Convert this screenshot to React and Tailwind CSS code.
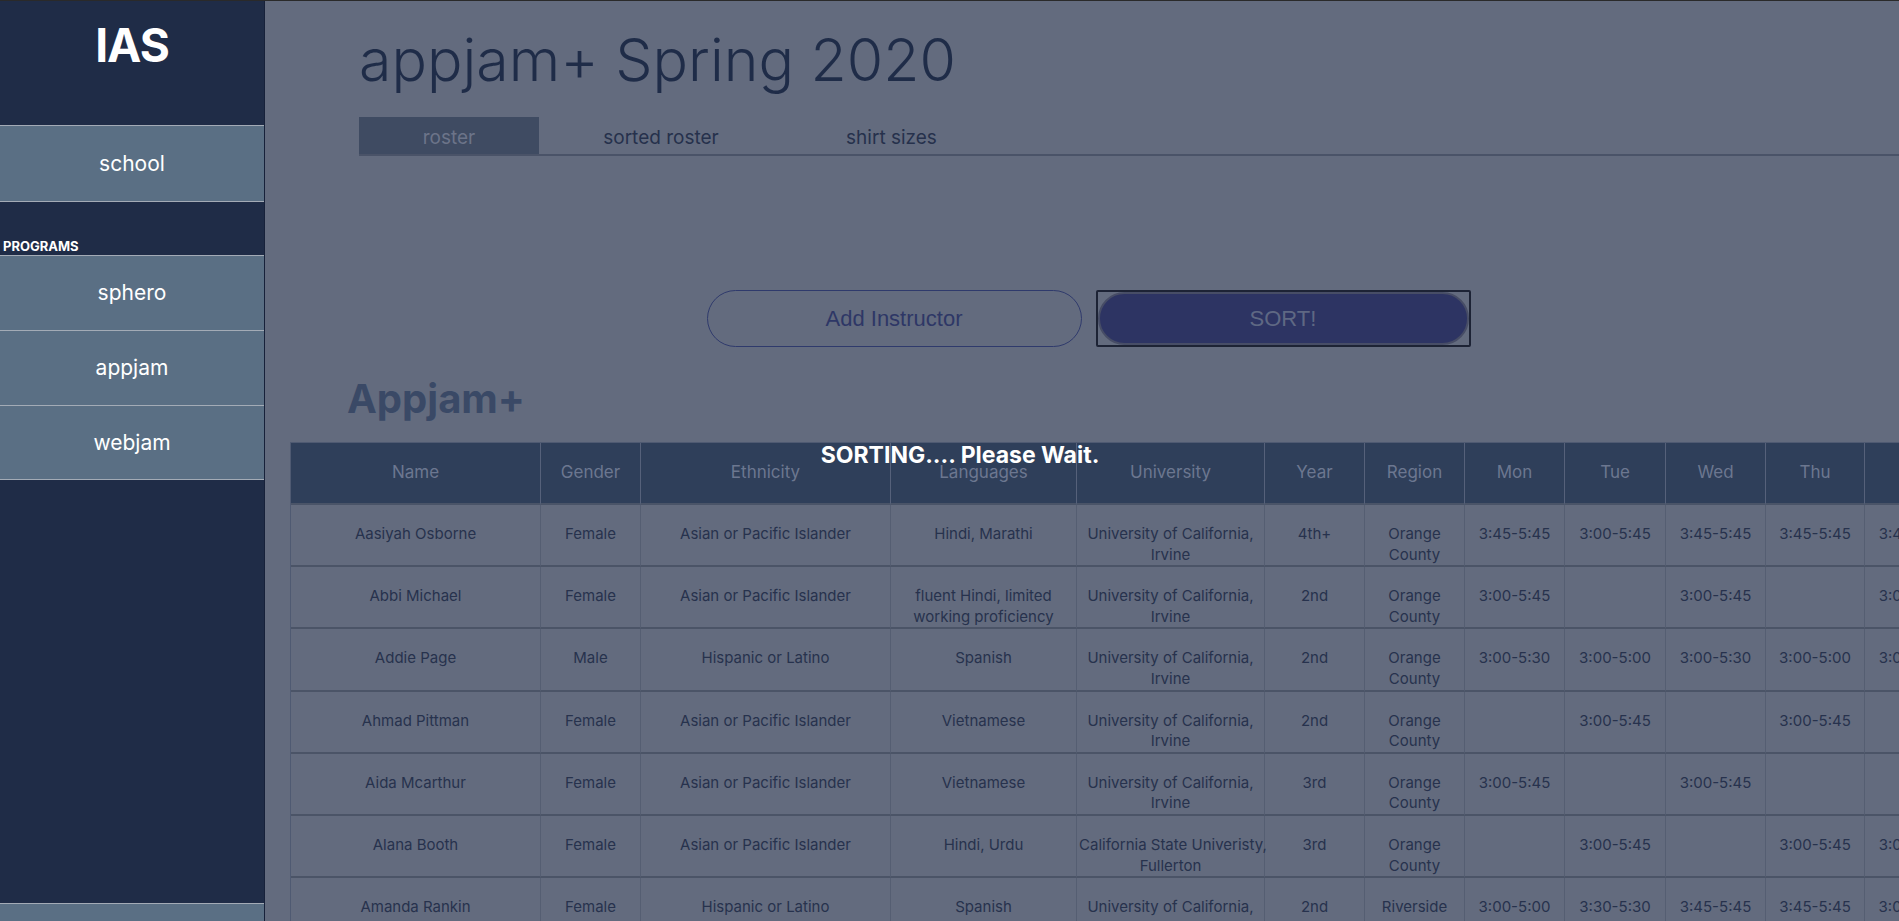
import React from "react";

const cols = [
  { h: "Name", w: 250 },
  { h: "Gender", w: 100 },
  { h: "Ethnicity", w: 250 },
  { h: "Languages", w: 186 },
  { h: "University", w: 188 },
  { h: "Year", w: 100 },
  { h: "Region", w: 100 },
  { h: "Mon", w: 100 },
  { h: "Tue", w: 101 },
  { h: "Wed", w: 100 },
  { h: "Thu", w: 99 },
  { h: "Fri", w: 100 },
  { h: "Shirt", w: 100 },
];

const UCI = ["University of California,", "Irvine"];
const OC = ["Orange", "County"];

const rows = [
  ["Aasiyah Osborne", "Female", "Asian or Pacific Islander", "Hindi, Marathi", UCI, "4th+", OC, "3:45-5:45", "3:00-5:45", "3:45-5:45", "3:45-5:45", "3:45-5:45", "M"],
  ["Abbi Michael", "Female", "Asian or Pacific Islander", ["fluent Hindi, limited", "working proficiency"], UCI, "2nd", OC, "3:00-5:45", "", "3:00-5:45", "", "3:00-5:45", "S"],
  ["Addie Page", "Male", "Hispanic or Latino", "Spanish", UCI, "2nd", OC, "3:00-5:30", "3:00-5:00", "3:00-5:30", "3:00-5:00", "3:00-5:30", "L"],
  ["Ahmad Pittman", "Female", "Asian or Pacific Islander", "Vietnamese", UCI, "2nd", OC, "", "3:00-5:45", "", "3:00-5:45", "", "S"],
  ["Aida Mcarthur", "Female", "Asian or Pacific Islander", "Vietnamese", UCI, "3rd", OC, "3:00-5:45", "", "3:00-5:45", "", "", "M"],
  ["Alana Booth", "Female", "Asian or Pacific Islander", "Hindi, Urdu", ["California State Univeristy,", "Fullerton"], "3rd", OC, "", "3:00-5:45", "", "3:00-5:45", "3:00-5:45", "S"],
  ["Amanda Rankin", "Female", "Hispanic or Latino", "Spanish", ["University of California,", "Riverside"], "2nd", "Riverside", "3:00-5:00", "3:30-5:30", "3:45-5:45", "3:45-5:45", "3:00-5:00", "M"],
];

function Cell({ v }) {
  if (Array.isArray(v)) {
    return (
      <>
        {v[0]}
        <br />
        {v[1]}
      </>
    );
  }
  return v;
}

function NavItem({ label, last }) {
  return (
    <div
      className={
        "h-[75px] shrink-0 flex items-center justify-center bg-[#5a6f84] border-t border-[#a3abb6] text-white text-[21px] " +
        (last ? "border-b" : "")
      }
    >
      {label}
    </div>
  );
}

export default function App() {
  return (
    <div
      className="relative w-[1899px] h-[921px] overflow-hidden flex border-t border-[#2a2a2a] bg-[#636b7e]"
      style={{ fontFamily: "Inter, 'Noto Sans', sans-serif" }}
    >
      {/* Sidebar */}
      <aside className="w-[265px] shrink-0 h-full overflow-hidden bg-[#1f2c47] border-r border-[#17213a] flex flex-col">
        <div className="h-[124px] shrink-0 pt-[21px] text-center text-white font-bold text-[46px] leading-none tracking-[-1px]">
          IAS
        </div>
        <div className="h-[77px] shrink-0 flex items-center justify-center bg-[#5a6f84] border-y border-[#a3abb6] text-white text-[21px]">
          school
        </div>
        <div className="h-[53px] shrink-0 flex items-end pl-[3px] pb-[2px]">
          <span className="text-white font-bold text-[13px] leading-none">PROGRAMS</span>
        </div>
        <NavItem label="sphero" />
        <NavItem label="appjam" />
        <NavItem label="webjam" last />
        <div className="mt-[423px] h-[76px] shrink-0 bg-[#5a6f84] border-t border-[#a3abb6]" />
      </aside>

      {/* Main */}
      <main className="flex-1 min-w-0 flex flex-col">
        <div className="pl-[94px] pt-[29px]">
          <h1 className="text-[59px] leading-none font-light text-[#1f2c48]">appjam+ Spring 2020</h1>
          <div className="mt-[28px] flex border-b-2 border-[#4a5368] text-[19px] text-[#26314c]">
            <div className="w-[180px] h-[37px] pt-[5px] flex items-center justify-center bg-[#3f4b62] text-[#6c7489]">
              roster
            </div>
            <div className="w-[244px] h-[37px] pt-[5px] flex items-center justify-center">sorted roster</div>
            <div className="w-[217px] h-[37px] pt-[5px] flex items-center justify-center">shirt sizes</div>
          </div>
        </div>

        <div
          className="mt-[134px] pl-[13px] flex justify-center gap-[14px]"
          style={{ fontFamily: "'Liberation Sans', Arial, sans-serif" }}
        >
          <button className="w-[375px] h-[57px] rounded-full border border-[#2f3a6c] text-[#2e3766] text-[22px] bg-transparent">
            Add Instructor
          </button>
          <div className="w-[375px] h-[57px] border-2 border-[#1d2335] rounded-[2px] p-0">
            <button className="w-full h-full rounded-full bg-[#2d3463] border-2 border-[#474d66] text-[#5f6883] text-[22px]">
              SORT!
            </button>
          </div>
        </div>

        <h2 className="mt-[32px] ml-[82px] text-[40px] leading-none font-bold text-[#3a4966]">Appjam+</h2>

        <div className="mt-[23px] ml-[25px]">
          <table
            className="table-fixed border-separate border-spacing-0 border-l border-t border-[#4f5a72]"
            style={{ width: cols.reduce((a, c) => a + c.w, 0) }}
          >
            <colgroup>
              {cols.map((c) => (
                <col key={c.h} style={{ width: c.w }} />
              ))}
            </colgroup>
            <thead>
              <tr>
                {cols.map((c) => (
                  <th
                    key={c.h}
                    className="h-[62px] bg-[#2f3f5a] text-[#6c7790] font-normal text-[17px] border-r border-b-2 border-r-[#56617a] border-b-[#4a5468] text-center align-middle"
                  >
                    {c.h}
                  </th>
                ))}
              </tr>
            </thead>
            <tbody>
              {rows.map((r, i) => (
                <tr key={i}>
                  {r.map((v, j) => (
                    <td
                      key={j}
                      className="pt-[19px] pb-0 px-[2px] text-center align-baseline whitespace-nowrap text-[15px] leading-[20.6px] text-[#27324d] border-r border-b-2 border-r-[#555e72] border-b-[#4b5467]"
                    >
                      <Cell v={v} />
                    </td>
                  ))}
                </tr>
              ))}
            </tbody>
          </table>
        </div>
      </main>

      {/* Sorting overlay text */}
      <div className="absolute top-[443px] left-[960px] -translate-x-1/2 text-white font-bold text-[23px] leading-none whitespace-nowrap">
        SORTING.... Please Wait.
      </div>
    </div>
  );
}
